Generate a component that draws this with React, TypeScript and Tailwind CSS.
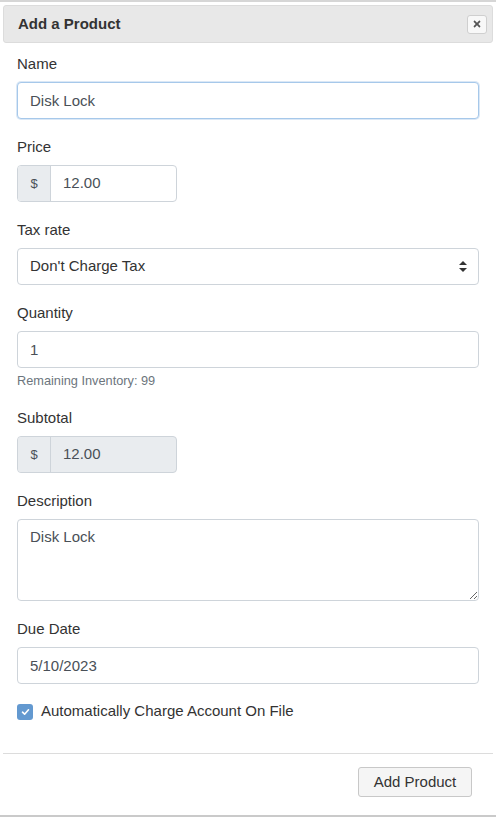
import React from "react";
import { FaTimes } from "react-icons/fa";

function Label({ children }: { children: React.ReactNode }) {
  return (
    <div className="mb-2 text-[15px] leading-[21px] text-[#333]">{children}</div>
  );
}

function TextInput({ value, focused }: { value: string; focused?: boolean }) {
  return (
    <input
      readOnly
      value={value}
      className={`block h-[37px] w-full rounded-[4px] border bg-white px-3 text-[15px] text-[#495057] outline-none ${
        focused
          ? "border-[#a6c8ea] shadow-[0_0_0_1px_#dbe8f6]"
          : "border-[#ced4da]"
      }`}
    />
  );
}

function MoneyInput({ value, disabled }: { value: string; disabled?: boolean }) {
  return (
    <div
      className={`flex h-[37px] w-[160px] overflow-hidden rounded-[4px] border border-[#ced4da] ${
        disabled ? "bg-[#e9ecef]" : "bg-white"
      }`}
    >
      <div className="flex w-[33px] shrink-0 items-center justify-center border-r border-[#ced4da] bg-[#e9ecef] text-[13px] text-[#495057]">
        $
      </div>
      <input
        readOnly
        value={value}
        className="min-w-0 flex-1 bg-transparent px-3 text-[15px] text-[#495057] outline-none"
      />
    </div>
  );
}

export default function App() {
  return (
    <div className="w-[496px] bg-white font-['Liberation_Sans',Arial,sans-serif]">
      <div className="border-t-2 border-[#d6d6d6]" />

      <div className="mx-[3px] mt-[3px] flex h-[38px] items-center justify-between rounded-[3px] border border-[#dcdcdc] bg-[#e8e8e8] pl-[14px] pr-[5px]">
        <div className="text-[15px] font-bold text-[#333]">Add a Product</div>
        <button className="flex h-[19px] w-[20px] items-center justify-center rounded-[3px] border border-[#cfcfcf] bg-[#f8f8f8]">
          <FaTimes size={10} color="#555" />
        </button>
      </div>

      <div className="px-[17px] pb-[31px] pt-[10px]">
        <div className="mb-[17px]">
          <Label>Name</Label>
          <TextInput value="Disk Lock" focused />
        </div>

        <div className="mb-[17px]">
          <Label>Price</Label>
          <MoneyInput value="12.00" />
        </div>

        <div className="mb-[17px]">
          <Label>Tax rate</Label>
          <div className="flex h-[37px] w-full items-center justify-between rounded-[4px] border border-[#ced4da] bg-white pl-3 pr-[11px] text-[15px] text-[#333]">
            <span>Don't Charge Tax</span>
            <svg width="8" height="11" viewBox="0 0 8 11">
              <path d="M4 0 L8 4 H0 Z" fill="#333" />
              <path d="M0 7 H8 L4 11 Z" fill="#333" />
            </svg>
          </div>
        </div>

        <div className="mb-[17px]">
          <Label>Quantity</Label>
          <TextInput value="1" />
          <div className="mt-[3px] text-[12.75px] leading-[19px] text-[#6c757d]">
            Remaining Inventory: 99
          </div>
        </div>

        <div className="mb-[17px]">
          <Label>Subtotal</Label>
          <MoneyInput value="12.00" disabled />
        </div>

        <div className="mb-[17px]">
          <Label>Description</Label>
          <textarea
            readOnly
            value="Disk Lock"
            className="block h-[82px] w-full rounded-[4px] border border-[#ced4da] bg-white px-3 py-[6px] text-[15px] leading-[21px] text-[#495057] outline-none"
          />
        </div>

        <div className="mb-[17px]">
          <Label>Due Date</Label>
          <TextInput value="5/10/2023" />
        </div>

        <div className="flex h-[21px] items-center gap-2">
          <div className="flex h-4 w-4 items-center justify-center rounded-[3px] bg-[#6399d0]">
            <svg width="9" height="8" viewBox="0 0 9 8">
              <path
                d="M1.5 4.2 L3.6 6.2 L7.5 1.8"
                fill="none"
                stroke="#fff"
                strokeWidth="1.6"
                strokeLinecap="round"
                strokeLinejoin="round"
              />
            </svg>
          </div>
          <span className="text-[15px] text-[#333]">
            Automatically Charge Account On File
          </span>
        </div>
      </div>

      <div className="mx-[3px] border-t border-[#dcdcdc]" />

      <div className="flex justify-end pb-[18px] pr-[24px] pt-[13px]">
        <button className="h-[30px] w-[114px] rounded-[3px] border border-[#c8c8c8] bg-[#f5f5f5] text-[15px] text-[#333]">
          Add Product
        </button>
      </div>

      <div className="border-t-2 border-[#cacaca]" />
    </div>
  );
}
